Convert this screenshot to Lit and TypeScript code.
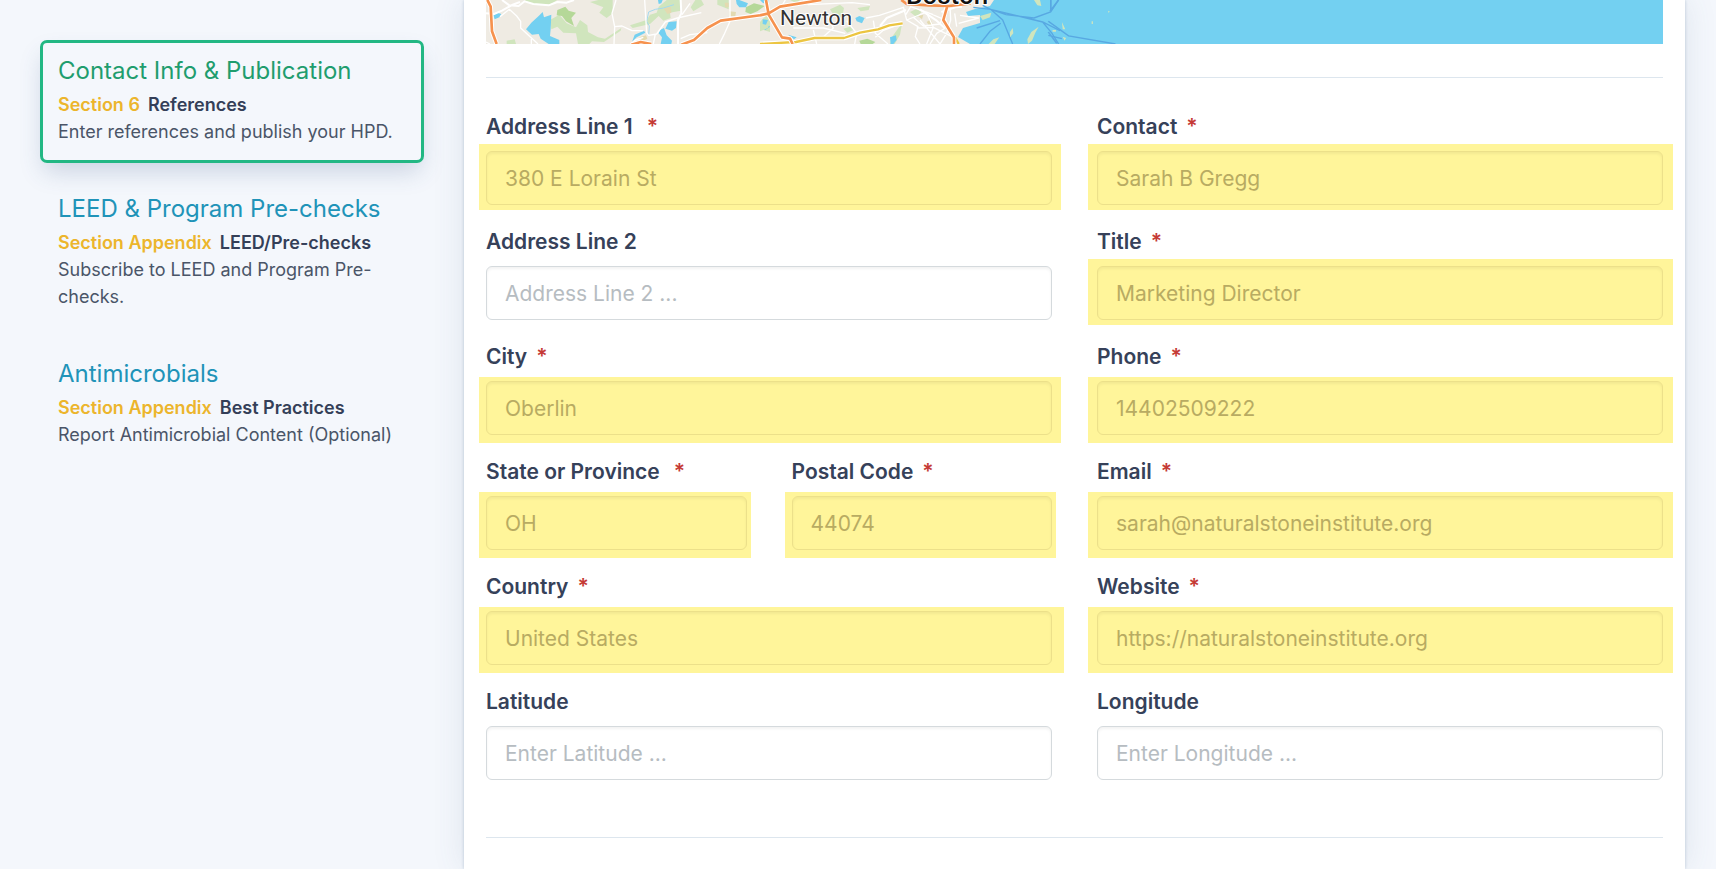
import { LitElement, html, css, nothing } from "lit";
import { customElement, property } from "lit/decorators.js";
import { classMap } from "lit/directives/class-map.js";

interface Field {
  id: string;
  label: string;
  required?: boolean;
  wideStar?: boolean;
  value?: string;
  placeholder?: string;
  mark?: string;
}

const LEFT_TOP: Field[] = [
  { id: "address1", label: "Address Line 1", required: true, wideStar: true, value: "380 E Lorain St", mark: "left high" },
  { id: "address2", label: "Address Line 2", placeholder: "Address Line 2 ..." },
  { id: "city", label: "City", required: true, value: "Oberlin", mark: "left low" },
];

const REGION: Field[] = [
  { id: "state", label: "State or Province", required: true, wideStar: true, value: "OH", mark: "left low narrow" },
  { id: "postal", label: "Postal Code", required: true, value: "44074", mark: "left low narrow" },
];

const LEFT_BOTTOM: Field[] = [
  { id: "country", label: "Country", required: true, value: "United States", mark: "left low wide" },
  { id: "latitude", label: "Latitude", placeholder: "Enter Latitude ..." },
];

const RIGHT: Field[] = [
  { id: "contact", label: "Contact", required: true, value: "Sarah B Gregg", mark: "right high" },
  { id: "title", label: "Title", required: true, value: "Marketing Director", mark: "right high" },
  { id: "phone", label: "Phone", required: true, value: "14402509222", mark: "right low" },
  { id: "email", label: "Email", required: true, value: "sarah@naturalstoneinstitute.org", mark: "right low" },
  { id: "website", label: "Website", required: true, value: "https://naturalstoneinstitute.org", mark: "right low" },
  { id: "longitude", label: "Longitude", placeholder: "Enter Longitude ..." },
];

@customElement("section-link")
export class SectionLink extends LitElement {
  @property() heading = "";
  @property() section = "";
  @property() topic = "";
  @property() description = "";
  @property({ type: Boolean }) active = false;

  static styles = css`
    :host {
      display: block;
    }
    .item {
      display: block;
      border: 3px solid transparent;
      border-radius: 7px;
      padding: 15px;
      color: #4a5568;
      text-decoration: none;
      font-size: 18px;
      line-height: 27px;
    }
    .active {
      border-color: #22b783;
      box-shadow: 0 12px 24px -4px rgba(50, 80, 130, 0.22);
    }
    .heading {
      margin: 0 0 7px;
      font-size: 24px;
      line-height: 26px;
      font-weight: 400;
      color: #2093b8;
    }
    .active .heading {
      color: #1f9d6e;
    }
    .meta {
      display: flex;
      gap: 8px;
      font-weight: 600;
      color: #343f58;
    }
    .section {
      color: #ecb52c;
    }
    .description {
      margin: 0;
    }
  `;

  render() {
    return html`
      <a class=${classMap({ item: true, active: this.active })} href="#" aria-current=${this.active ? "page" : nothing}>
        <h2 class="heading">${this.heading}</h2>
        <div class="meta"><span class="section">${this.section}</span><span>${this.topic}</span></div>
        <p class="description">${this.description}</p>
      </a>
    `;
  }
}

@customElement("area-map")
export class AreaMap extends LitElement {
  static styles = css`
    :host {
      display: block;
    }
    .map {
      display: block;
      width: 100%;
      height: 44px;
      background: #73d0f1;
    }
    .land { fill: #efebe3; }
    .water { fill: #73d0f1; }
    .park { fill: #d0e5bd; }
    .wood { fill: #b5d898; }
    .sand { fill: #e3dab0; }
    .street { fill: none; stroke: #fff; stroke-width: 6; stroke-linejoin: round; }
    .thin { stroke-width: 4; }
    .motorway { fill: none; stroke: #f6924e; stroke-width: 8; stroke-linejoin: round; }
    .casing { fill: none; stroke: #fff; stroke-width: 14; stroke-linejoin: round; }
    .trunk { fill: none; stroke: #ecc542; stroke-width: 7; stroke-linejoin: round; }
    .ferry { fill: none; stroke: #58a8e2; stroke-width: 4; }
    .stream { fill: none; stroke: #a5d9ee; stroke-width: 3; }
    .town {
      font-family: Roboto, "Liberation Sans", sans-serif;
      font-size: 21px;
      fill: #333;
      stroke: #fff;
      stroke-width: 2px;
      paint-order: stroke;
    }
    .capital {
      font-size: 26px;
      font-weight: 500;
      fill: #111;
    }
  `;

  render() {
    return html`
      <svg class="map" viewBox="486 0 1177 44" preserveAspectRatio="xMinYMin slice" role="img" aria-label="Map of the Boston area">
        <path class="land" d="M486 0H994L990 6L975 9L966 12L968 16L980 15L980 23L963 28L958 37L970 44H486Z" />
        <g transform="translate(470 0) scale(.33333)">
          <path class="park" d="M162 0H262L238 14L190 12ZM385 0H428V40L410 54L388 38L400 22L360 6ZM240 60L268 44L290 70L318 82L330 60L352 76L354 96L384 112L405 116L454 84L452 92L402 126L366 124L358 132H324L318 100L280 98L262 80L244 88ZM480 76L530 60L540 44L560 38L566 20L590 0H632V32L600 38L602 54L580 62L566 48L540 72L488 84ZM662 22L676 0H694L702 14L670 34ZM742 0H776V28L742 14ZM110 122L134 118L138 132H110ZM876 62L900 54V96L880 90Z" />
          <path class="wood" d="M262 30L286 20L296 32L318 38L304 54L312 78L288 64L276 48L260 46ZM828 22L852 10L884 18L862 34L842 42L826 36Z" />
          <path class="water" d="M70 46L82 38L94 42L88 52L74 58ZM184 68L206 48L218 36L222 52L244 44L242 88L240 108L268 120V132H236L212 116L206 102L186 104L168 88ZM494 104L522 92L526 98L500 112L486 126ZM596 66L620 64L618 84L606 92L586 86ZM570 90L582 84L590 106L606 122L604 132H572L576 112L566 100ZM798 0H808L834 10L828 22L808 22L800 12ZM878 66L892 58L894 74L900 80L886 90L874 82ZM564 0H578L574 10L566 12Z" />
          <path class="sand" d="M580 24L602 20L604 38L592 42ZM778 34L798 36L796 48H778ZM508 112L528 106L532 116L518 124ZM764 8H776V22H766Z" />
          <path class="stream" d="M536 106L538 78L530 64L536 36L556 28L580 24L612 14" />
          <path class="street" d="M48 40L72 42L96 32L128 14L150 6M96 0L118 16L146 18L164 4L190 12L236 16L262 6L290 8L312 0M632 0L634 40L624 60V132" />
          <path class="street thin" d="M90 50L118 28L140 48L152 64V84L182 112L204 132M184 112V132M48 126L60 132M438 0L426 40L434 80L432 132M434 80L456 78L486 92L520 92M524 0L530 98L536 106L560 102L586 66L622 54L694 38M660 10L636 44M780 0V64L762 104L748 132M632 116L660 104L712 98M520 112L496 120L482 132M556 102L550 132" />
          <path class="casing" d="M52 0L62 20L66 94L80 132M634 134L672 120L712 84L752 62L898 42M484 134L512 126L544 132" />
          <path class="motorway" d="M52 0L62 20L66 94L80 132M634 134L672 120L712 84L752 62L898 42M484 134L512 126L544 132M888 0L892 20V42" />
        </g>
        <g transform="translate(760 0) scale(.33333)">
          <path class="park" d="M0 66L20 44L32 62L24 84L0 94ZM210 28L240 14L252 24L246 54L222 48ZM250 86L270 80L280 90L262 98ZM418 80L426 72L420 104L404 132H390L398 108ZM450 36L470 26L484 36L470 52ZM90 0H120L110 10ZM292 24L330 18L326 30L302 34Z" />
          <path class="wood" d="M298 122L322 116L346 126L338 132H302Z" />
          <path class="water" d="M0 0H26V16L8 8ZM8 58L24 60L18 74L8 72ZM286 54L298 48L314 54L306 70L290 64ZM390 112L408 106L410 120L400 132H392ZM84 104L110 112L102 118Z" />
          <path class="sand" d="M474 48L490 44L486 58ZM500 66L512 58L518 72L508 78Z" />
          <path class="street thin" d="M76 0L62 24L28 44M130 0L146 14L276 8L330 14M196 34L220 84L186 114M100 84L190 84L256 100M160 90L170 132M318 54L358 46L430 22M340 62L346 100L384 132M430 20L440 60L474 80L466 110L480 132M440 60L500 36L560 62M470 84L520 82L576 110M500 40L520 82L500 132M460 52L490 78L540 72L552 40M480 60L540 132M424 64L400 80L368 92L346 112M570 18L572 60L560 100L540 132M584 40L590 80M600 46L656 54L596 70M260 62L290 100L284 132M436 46L452 20L520 44M510 132L530 100L556 84" />
          <path class="street" d="M544 36L586 22L606 20M554 84L530 62L480 28M360 78L380 54L438 30" />
          <path class="casing" d="M0 132L108 126L164 114H252L300 98L354 88L388 76L428 70" />
          <path class="trunk" d="M0 132L108 126L164 114H252L300 98L354 88L388 76L428 70M582 106L596 132" />
          <path class="casing" d="M0 46L26 40L60 20L184 0M18 0L26 44L66 112L90 116L98 132M562 12L550 60L582 112V132" />
          <path class="motorway" d="M0 46L26 40L60 20L184 0M18 0L26 44L66 112L90 116L98 132M424 0L440 12L508 16L568 18L632 10M562 18L550 60L582 112V132" />
          <path class="ferry" d="M640 22L692 28L848 66L900 92M692 28L728 60L758 132M668 16L692 28L738 44L822 54L872 36L896 0M848 66L876 100L896 132M722 70L690 94L660 132M720 62L650 84" />
          <path class="park" d="M822 0H840L844 18L832 16ZM836 80L826 98L816 122L804 132L802 118L814 96ZM758 84L760 100L750 112V96ZM718 112L704 132H686L700 118ZM660 48L694 38L690 52L668 60Z" />
        </g>
        <g transform="translate(1050 0) scale(.42481 .33333)">
          <path class="ferry" d="M-4 64L44 108L154 132M-4 96L16 130M0 34L20 0M2 0V30M-4 106L28 116" />
          <path class="park" d="M28 66L36 88H30ZM6 90H14V95H6ZM30 110L38 114L34 122ZM98 64H101V72H98ZM137 32L141 35L137 38Z" />
        </g>
        <text class="town" x="780" y="25">Newton</text>
        <text class="town capital" x="906" y="4">Boston</text>
      </svg>
    `;
  }
}

@customElement("app-root")
export class AppRoot extends LitElement {
  static styles = css`
    :host {
      display: block;
      font-family: Inter, "Liberation Sans", sans-serif;
      background: #f4f7fc;
    }
    * {
      box-sizing: border-box;
    }
    .page {
      display: grid;
      grid-template-columns: 464px minmax(0, 1fr);
      min-height: 100vh;
      padding-right: 31px;
    }
    .sidebar {
      display: flex;
      flex-direction: column;
      gap: 15px;
      padding: 40px;
    }
    .panel {
      padding: 0 22px 31px;
      background: #fff;
      box-shadow: 0 0 3px rgba(70, 110, 140, 0.3), 0 0 30px rgba(70, 100, 130, 0.13);
    }
    .rule {
      height: 1px;
      margin: 0;
      border: 0;
      background: #dde6ee;
    }
    .first {
      margin-top: 33px;
    }
    .form {
      display: grid;
      grid-template-columns: repeat(2, minmax(0, 1fr));
      gap: 45px;
      padding: 34px 0 57px;
    }
    .column {
      display: flex;
      flex-direction: column;
      gap: 22px;
    }
    .pair {
      display: grid;
      grid-template-columns: repeat(2, minmax(0, 1fr));
      gap: 45px;
    }
    .field {
      display: flex;
      flex-direction: column;
      gap: 9px;
    }
    .label {
      display: flex;
      gap: 9px;
      font-size: 21px;
      line-height: 30px;
      font-weight: 600;
      color: #364159;
    }
    .spaced {
      gap: 14px;
    }
    .star {
      color: #c53a35;
    }
    .control {
      position: relative;
      display: flex;
    }
    .input {
      position: relative;
      width: 100%;
      height: 54px;
      padding: 0 18px;
      border: 1px solid #d5dadd;
      border-radius: 6px;
      background: #fff;
      box-shadow: inset 0 2px 3px rgba(0, 0, 0, 0.05);
      font: 400 21px/30px Inter, "Liberation Sans", sans-serif;
      color: #b8ab62;
    }
    .input::placeholder {
      color: #b6bcc1;
      opacity: 1;
    }
    .marked {
      background: transparent;
      border-color: #ece08a;
    }
    .mark {
      position: absolute;
      background: #fff59a;
    }
    .left { left: -7px; right: -9px; }
    .right { left: -9px; right: -10px; }
    .narrow { right: -4px; }
    .wide { right: -12px; }
    .high { top: -7px; bottom: -5px; }
    .low { top: -4px; bottom: -8px; }
  `;

  private field(f: Field) {
    return html`
      <div class="field">
        <label class=${classMap({ label: true, spaced: !!f.wideStar })} for=${f.id}>
          <span>${f.label}</span>${f.required ? html`<span class="star">*</span>` : nothing}
        </label>
        <div class="control">
          ${f.mark ? html`<span class="mark ${f.mark}"></span>` : nothing}
          <input
            class=${classMap({ input: true, marked: !!f.mark })}
            id=${f.id}
            type="text"
            .value=${f.value ?? ""}
            placeholder=${f.placeholder ?? nothing}
            ?required=${f.required}
          />
        </div>
      </div>
    `;
  }

  render() {
    return html`
      <div class="page">
        <nav class="sidebar" aria-label="Sections">
          <section-link
            active
            heading="Contact Info & Publication"
            section="Section 6"
            topic="References"
            description="Enter references and publish your HPD."
          ></section-link>
          <section-link
            heading="LEED & Program Pre-checks"
            section="Section Appendix"
            topic="LEED/Pre-checks"
            description="Subscribe to LEED and Program Pre-checks."
          ></section-link>
          <section-link
            heading="Antimicrobials"
            section="Section Appendix"
            topic="Best Practices"
            description="Report Antimicrobial Content (Optional)"
          ></section-link>
        </nav>
        <main class="panel">
          <area-map></area-map>
          <hr class="rule first" />
          <form class="form">
            <div class="column">
              ${LEFT_TOP.map((f) => this.field(f))}
              <div class="pair">${REGION.map((f) => this.field(f))}</div>
              ${LEFT_BOTTOM.map((f) => this.field(f))}
            </div>
            <div class="column">${RIGHT.map((f) => this.field(f))}</div>
          </form>
          <hr class="rule" />
        </main>
      </div>
    `;
  }
}
